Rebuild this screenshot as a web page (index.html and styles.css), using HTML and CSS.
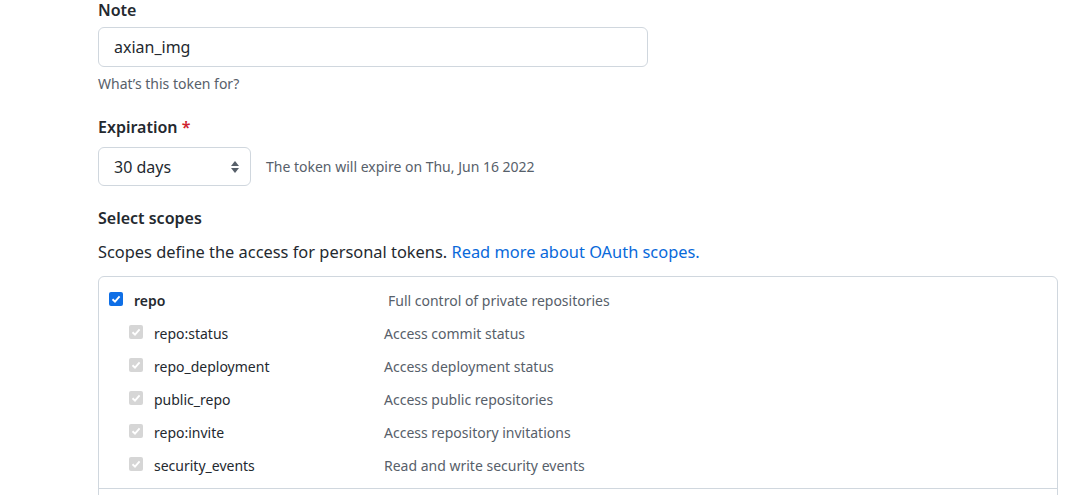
FILE: index.html
```html
<!DOCTYPE html>
<html>
<head>
<meta charset="utf-8">
<link rel="stylesheet" href="styles.css">
</head>
<body>
<div class="page">
  <div class="form-group">
    <label class="label first">Note</label>
    <div class="input">axian_img</div>
    <p class="note">What’s this token for?</p>
  </div>
  <div class="form-group exp">
    <label class="label">Expiration <span class="req">*</span></label>
    <div class="exp-row">
      <div class="select">
        <span>30 days</span>
        <svg class="arrows" width="8" height="14" viewBox="0 0 8 14"><path d="M4 1 L8 6 H0 Z" fill="#57606a"/><path d="M4 13 L8 8 H0 Z" fill="#57606a"/></svg>
      </div>
      <span class="exp-note">The token will expire on Thu, Jun 16 2022</span>
    </div>
  </div>
  <h3 class="label scopes-title">Select scopes</h3>
  <p class="scopes-desc">Scopes define the access for personal tokens. <a class="link">Read more about OAuth scopes.</a></p>
  <div class="scopes-box">
    <div class="group">
      <div class="row parent">
        <span class="cb checked"><svg width="10" height="10" viewBox="0 0 10 10"><path d="M1.5 5.2 L4 7.6 L8.6 2.4" stroke="#fff" stroke-width="1.9" fill="none"/></svg></span>
        <span class="name">repo</span>
        <span class="desc">Full control of private repositories</span>
      </div>
      <div class="row child">
        <span class="cb disabled"><svg width="10" height="10" viewBox="0 0 10 10"><path d="M1.5 5.2 L4 7.6 L8.6 2.4" stroke="#fff" stroke-width="1.9" fill="none"/></svg></span>
        <span class="name">repo:status</span>
        <span class="desc">Access commit status</span>
      </div>
      <div class="row child">
        <span class="cb disabled"><svg width="10" height="10" viewBox="0 0 10 10"><path d="M1.5 5.2 L4 7.6 L8.6 2.4" stroke="#fff" stroke-width="1.9" fill="none"/></svg></span>
        <span class="name">repo_deployment</span>
        <span class="desc">Access deployment status</span>
      </div>
      <div class="row child">
        <span class="cb disabled"><svg width="10" height="10" viewBox="0 0 10 10"><path d="M1.5 5.2 L4 7.6 L8.6 2.4" stroke="#fff" stroke-width="1.9" fill="none"/></svg></span>
        <span class="name">public_repo</span>
        <span class="desc">Access public repositories</span>
      </div>
      <div class="row child">
        <span class="cb disabled"><svg width="10" height="10" viewBox="0 0 10 10"><path d="M1.5 5.2 L4 7.6 L8.6 2.4" stroke="#fff" stroke-width="1.9" fill="none"/></svg></span>
        <span class="name">repo:invite</span>
        <span class="desc">Access repository invitations</span>
      </div>
      <div class="row child">
        <span class="cb disabled"><svg width="10" height="10" viewBox="0 0 10 10"><path d="M1.5 5.2 L4 7.6 L8.6 2.4" stroke="#fff" stroke-width="1.9" fill="none"/></svg></span>
        <span class="name">security_events</span>
        <span class="desc">Read and write security events</span>
      </div>
    </div>
  </div>
</div>
</body>
</html>
```
FILE: styles.css
```css
* { box-sizing: border-box; }
html, body { margin: 0; padding: 0; background: #fff; overflow: hidden; }
body {
  font-family: "Noto Sans", "Open Sans", sans-serif;
  color: #24292f;
  font-size: 14px;
}
.page {
  padding-left: 98px;
  width: 1058px;
}
.label {
  display: block;
  font-weight: 600;
  font-size: 16px;
  line-height: 20px;
  margin: 0;
}
.input {
  margin-top: 7px;
  width: 550px;
  height: 40px;
  border: 1px solid #d0d7de;
  border-radius: 6px;
  padding: 0 15px;
  font-size: 16px;
  line-height: 38px;
  color: #24292f;
}
.note {
  margin: 7px 0 0;
  font-size: 14px;
  line-height: 20px;
  color: #57606a;
}
.exp { margin-top: 23px; }
.req { color: #cf222e; }
.exp-row {
  margin-top: 10px;
  display: flex;
  align-items: center;
  gap: 15px;
}
.select {
  width: 153px;
  height: 39px;
  border: 1px solid #d0d7de;
  border-radius: 6px;
  padding: 0 11px 0 15px;
  display: flex;
  align-items: center;
  justify-content: space-between;
  font-size: 16px;
}
.exp-note { color: #57606a; font-size: 14px; }
.scopes-title { margin-top: 22px; }
.scopes-desc {
  margin: 12px 0 0;
  font-size: 16.4px;
  line-height: 24px;
}
.link { color: #0969da; text-decoration: none; }
.scopes-box {
  margin-top: 12px;
  border: 1px solid #d0d7de;
  border-radius: 6px;
  height: 240px;
}
.group {
  border-bottom: 1px solid #d0d7de;
  padding: 6px 0 6px;
}
.row {
  display: grid;
  align-items: center;
  height: 33px;
  font-size: 14px;
}
.row.parent {
  grid-template-columns: 25px 254px 1fr;
  padding-left: 10px;
  height: 34px;
}
.row.parent .name { font-weight: 600; }
.row.child {
  grid-template-columns: 25px 230px 1fr;
  padding-left: 30px;
}
.desc { color: #57606a; }
.cb {
  width: 14px;
  height: 14px;
  border-radius: 2px;
  display: flex;
  align-items: center;
  justify-content: center;
  margin-top: -3px;
}
.cb.checked { background: #0f6fe6; }
.cb.disabled { background: #d6d6d6; }
```
